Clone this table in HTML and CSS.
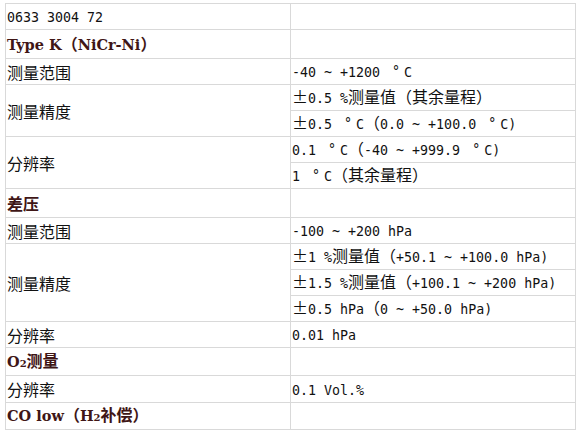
FILE: index.html
```html
<!DOCTYPE html>
<html lang="zh-CN">
<head>
<meta charset="utf-8">
<title>0633 3004 72</title>
<link rel="stylesheet" href="styles.css">
</head>
<body>
<table class="spec">
  <colgroup><col class="c1"><col class="c2"></colgroup>
  <tr class="row"><td class="k"><span class="m">0633 3004 72</span></td><td class="v"></td></tr>
  <tr class="head"><td class="k"><span class="b">Type K</span>（<span class="b">NiCr-Ni</span>）</td><td class="v"></td></tr>
  <tr class="row"><td class="k">测量范围</td><td class="v"><span class="m">-40 ~ +1200 </span><span class="deg">°</span><span class="m">C</span></td></tr>
  <tr class="row"><td class="k" rowspan="2">测量精度</td><td class="v">±<span class="m">0.5 %</span>测量值（其余量程）</td></tr>
  <tr class="row"><td class="v">±<span class="m">0.5 </span><span class="deg">°</span><span class="m">C</span>（<span class="m">0.0 ~ +100.0 </span><span class="deg">°</span><span class="m">C)</span></td></tr>
  <tr class="row"><td class="k" rowspan="2">分辨率</td><td class="v"><span class="m">0.1 </span><span class="deg">°</span><span class="m">C</span>（<span class="m">-40 ~ +999.9 </span><span class="deg">°</span><span class="m">C)</span></td></tr>
  <tr class="row"><td class="v"><span class="m">1 </span><span class="deg">°</span><span class="m">C</span>（其余量程）</td></tr>
  <tr class="head"><td class="k">差压</td><td class="v"></td></tr>
  <tr class="row"><td class="k">测量范围</td><td class="v"><span class="m">-100 ~ +200 hPa</span></td></tr>
  <tr class="row"><td class="k" rowspan="3">测量精度</td><td class="v">±<span class="m">1 %</span>测量值（<span class="m">+50.1 ~ +100.0 hPa)</span></td></tr>
  <tr class="row"><td class="v">±<span class="m">1.5 %</span>测量值（<span class="m">+100.1 ~ +200 hPa)</span></td></tr>
  <tr class="row"><td class="v">±<span class="m">0.5 hPa</span>（<span class="m">0 ~ +50.0 hPa)</span></td></tr>
  <tr class="row"><td class="k">分辨率</td><td class="v"><span class="m">0.01 hPa</span></td></tr>
  <tr class="head h28"><td class="k"><span class="b">O<sub class="sub">2</sub></span>测量</td><td class="v"></td></tr>
  <tr class="row r27"><td class="k">分辨率</td><td class="v"><span class="m">0.1 Vol.%</span></td></tr>
  <tr class="head h27"><td class="k"><span class="b">CO low</span>（<span class="b">H<sub class="sub">2</sub></span>补偿）</td><td class="v"></td></tr>
</table>
</body>
</html>
```
FILE: styles.css
```css
html, body {
  margin: 0;
  padding: 0;
  background: #ffffff;
}

body {
  padding: 3px 0 0 5px;
  font-family: "Noto Sans CJK SC", "Noto Sans", sans-serif;
  font-size: 16px;
  color: #111111;
}

.spec {
  border-collapse: collapse;
  table-layout: fixed;
  width: 570px;
}

.c1 { width: 285px; }
.c2 { width: 285px; }

.spec td {
  border: 1px solid #d9d9d9;
  padding: 0 0 0 1px;
  vertical-align: middle;
  line-height: 18px;
  white-space: nowrap;
}

.row td { height: 25px; }
.head td { height: 28px; }
.h28 td { height: 27px; }
.h27 td { height: 26px; }
.r27 td { height: 26px; }

.v { padding-left: 0; }

.m {
  font-family: "DejaVu Sans Mono", "Liberation Mono", monospace;
  font-size: 13.3px;
}

.deg {
  display: inline-block;
  width: 16px;
  text-align: center;
  font-family: "DejaVu Sans Mono", "Liberation Mono", monospace;
  font-size: 13.3px;
  position: relative;
  top: -1px;
}

.head .k {
  font-weight: bold;
  color: #3f1616;
}

.b {
  font-family: "DejaVu Serif", serif;
  font-size: 14.5px;
  font-weight: bold;
}

.sub {
  font-size: 10px;
  vertical-align: 0;
}
```
